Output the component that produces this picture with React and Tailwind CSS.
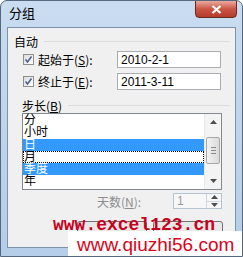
import React from 'react'

const cjk = { fontFamily: '"Noto Sans CJK SC", "Liberation Sans", sans-serif' }
const listFont = { fontFamily: '"Liberation Sans", "Noto Sans CJK SC", sans-serif' }

function Check() {
  return (
    <span className="w-[11px] h-[11px] border border-[#8f8f8f] bg-gradient-to-br from-[#dcdcdc] to-[#ffffff] flex items-center justify-center shrink-0">
      <svg width="9" height="9" viewBox="0 0 9 9">
        <path d="M1.5 4.5 L3.5 7 L7.5 1.5" fill="none" stroke="#4a5f97" strokeWidth="1.6" />
      </svg>
    </span>
  )
}

function Arrow({ down }) {
  return (
    <svg width="7" height="4" viewBox="0 0 7 4">
      <path d={down ? 'M0 0 L7 0 L3.5 4 Z' : 'M0 4 L7 4 L3.5 0 Z'} fill="#4d4d4d" />
    </svg>
  )
}

function App() {
  const items = [
    { t: '分' },
    { t: '小时' },
    { t: '日', sel: true },
    { t: '月', focus: true },
    { t: '季度', sel: true },
    { t: '年' },
  ]

  return (
    <div className="w-[243px] h-[257px] overflow-hidden relative flex flex-col bg-gradient-to-b from-[#c9dcf0] to-[#b5cde8] border border-[#56687e] rounded-t-[7px] text-[12px] text-black" style={cjk}>
      <div className="h-[26px] flex items-start justify-between pl-[8px] pr-[5px] shrink-0">
        <span className="mt-[4px] text-[13px] leading-[16px]">分组</span>
        <div className="w-[42px] h-[18px] -mt-[1px] rounded-b-[4px] border border-[#6b2a22] bg-gradient-to-b from-[#e9aa9f] via-[#cc5443] to-[#b43c2c] flex items-center justify-center">
          <svg width="11" height="9" viewBox="0 0 11 9">
            <path d="M1.5 1 L9.5 8 M9.5 1 L1.5 8" stroke="#ffffff" strokeWidth="2.2" />
          </svg>
        </div>
      </div>

      <div className="flex-1 mx-[6px] mb-[8px] border border-[#7d93ab] bg-[#f0f0f0] flex flex-col">
        <div className="flex items-center pl-[6px] pr-[5px] mt-[7px] h-[13px]">
          <span className="leading-[13px]">自动</span>
          <span className="flex-1 ml-[6px] border-t border-[#dcdcdc]" />
        </div>

        <div className="flex items-center mt-[3px] h-[17px] pl-[15px]">
          <Check />
          <span className="ml-[4px] w-[79px] leading-[14px]">起始于(<u>S</u>):</span>
          <div className="w-[104px] h-[17px] border border-[#abadb3] bg-white pl-[3px] flex items-center" style={{ fontFamily: '"Liberation Sans", sans-serif' }}>
            2010-2-1
          </div>
        </div>
        <div className="flex items-center mt-[5px] h-[17px] pl-[15px]">
          <Check />
          <span className="ml-[4px] w-[79px] leading-[14px]">终止于(<u>E</u>):</span>
          <div className="w-[104px] h-[17px] border border-[#abadb3] bg-white pl-[3px] flex items-center" style={{ fontFamily: '"Liberation Sans", sans-serif' }}>
            2011-3-11
          </div>
        </div>

        <div className="flex items-center pl-[14px] pr-[5px] mt-[9px] h-[13px]">
          <span className="leading-[13px]">步长(<u>B</u>)</span>
          <span className="flex-1 ml-[6px] border-t border-[#dcdcdc]" />
        </div>

        <div className="ml-[14px] mt-[1px] w-[200px] h-[77px] border border-[#828790] bg-white flex">
          <div className="flex-1 flex flex-col" style={listFont}>
            {items.map((it) => (
              <div
                key={it.t}
                className={`h-[12.3px] leading-[12px] pl-[1px] text-[12px] ${it.sel ? 'bg-[#3399ff] text-white' : ''} ${it.focus ? 'outline outline-1 outline-dotted outline-black -outline-offset-1' : ''}`}
              >
                {it.t}
              </div>
            ))}
          </div>
          <div className="w-[17px] flex flex-col items-center bg-[#f4f4f4] border-l border-[#e8e8e8]">
            <div className="h-[16px] flex items-center justify-center"><Arrow /></div>
            <div className="flex-1 w-full px-[1px] pt-[7px]">
              <div className="h-[27px] rounded-[2px] border border-[#a7a7a7] bg-gradient-to-r from-[#f2f2f2] to-[#dadada] flex flex-col items-center justify-center gap-[2px]">
                <span className="w-[5px] border-t border-[#8a8a8a]" />
                <span className="w-[5px] border-t border-[#8a8a8a]" />
                <span className="w-[5px] border-t border-[#8a8a8a]" />
              </div>
            </div>
            <div className="h-[16px] flex items-center justify-center"><Arrow down /></div>
          </div>
        </div>

        <div className="flex items-center mt-[3px] h-[16px] pl-[89px]">
          <span className="w-[76px] text-[#8d8d8d] leading-[13px]">天数(<u>N</u>):</span>
          <div className="w-[49px] h-[16px] border border-[#b5c3d2] bg-[#f7f7f7] flex">
            <span className="flex-1 pl-[3px] text-[#9a9a9a] leading-[14px]" style={{ fontFamily: '"Liberation Sans", sans-serif' }}>1</span>
            <div className="w-[15px] flex flex-col border-l border-[#cfd6dd]">
              <div className="flex-1 flex items-center justify-center border-b border-[#cfd6dd]"><Arrow /></div>
              <div className="flex-1 flex items-center justify-center"><Arrow down /></div>
            </div>
          </div>
        </div>

        <div className="flex justify-end gap-[6px] pr-[12px] mt-[12px]">
          <div className="w-[70px] h-[22px] border border-[#707070] rounded-[3px] bg-[#e8e8e8]" />
          <div className="w-[70px] h-[22px] border border-[#707070] rounded-[3px] bg-[#e8e8e8]" />
        </div>
      </div>

      <div className="absolute left-[52px] top-[215px] text-[18px] leading-[18px] font-bold text-[#c8001e]" style={{ fontFamily: '"Liberation Mono", monospace' }}>
        www.excel123.cn
      </div>
      <div className="absolute left-[67px] top-[230px] w-[174px] h-[27px] bg-white flex items-center pl-[9px] text-[19px] leading-[19px] text-[#de0018]" style={{ fontFamily: '"Liberation Sans", Arial, sans-serif' }}>
        www.qiuzhi56.com
      </div>
    </div>
  )
}

export default App
